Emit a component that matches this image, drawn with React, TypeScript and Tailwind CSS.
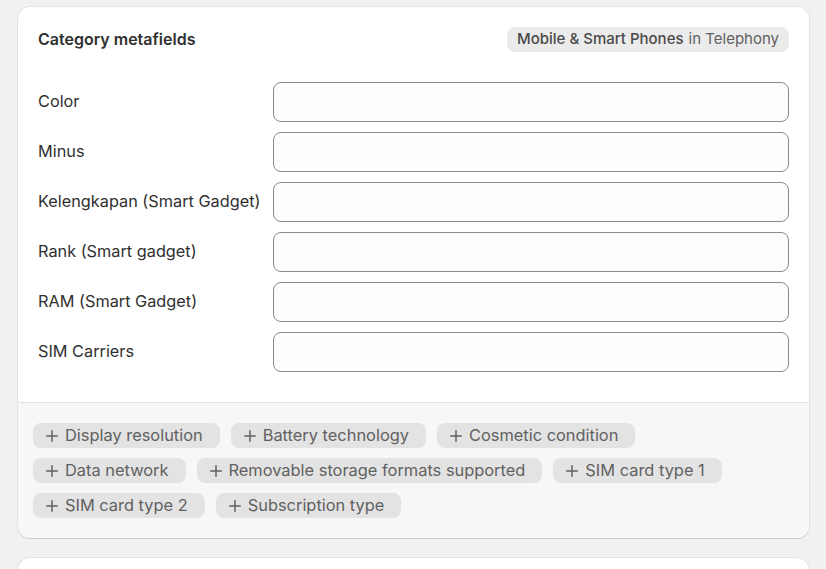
import React from "react";

const fields = [
  "Color",
  "Minus",
  "Kelengkapan (Smart Gadget)",
  "Rank (Smart gadget)",
  "RAM (Smart Gadget)",
  "SIM Carriers",
];

const chips = [
  "Display resolution",
  "Battery technology",
  "Cosmetic condition",
  "Data network",
  "Removable storage formats supported",
  "SIM card type 1",
  "SIM card type 2",
  "Subscription type",
];

function Plus() {
  return (
    <svg width="12" height="12" viewBox="0 0 12 12" fill="none" className="shrink-0">
      <path d="M6 0.75v10.5M0.75 6h10.5" stroke="#616161" strokeWidth="1.5" strokeLinecap="round" />
    </svg>
  );
}

export default function App() {
  return (
    <div
      className="h-[569px] bg-[#f1f1f1] pl-[18px] pr-[17px] pt-[7px] overflow-hidden"
      style={{ fontFamily: "Inter, 'Noto Sans', sans-serif" }}
    >
      <div className="rounded-[12px] bg-white shadow-[0_1px_0_0_rgba(26,26,26,0.12),0_0_0_1px_rgba(0,0,0,0.05)] overflow-hidden">
        <div className="px-5 pt-5 pb-[30px]">
          <div className="flex items-center justify-between h-[25px]">
            <h2 className="text-[16px] font-semibold text-[#303030] leading-[25px]">Category metafields</h2>
            <span className="rounded-[8px] bg-[#ebebeb] px-[10px] h-[25px] flex items-center text-[15px] text-[#616161]">
              <span className="font-medium text-[#4a4a4a]">Mobile &amp; Smart Phones</span>
              <span className="ml-[5px]">in Telephony</span>
            </span>
          </div>
          <div className="mt-[30px] flex flex-col gap-[10px]">
            {fields.map((f) => (
              <div key={f} className="grid grid-cols-[235px_1fr] items-center">
                <label className="text-[16.3px] text-[#303030] leading-[20px] -mt-[2px]">{f}</label>
                <div className="h-[40px] rounded-[8px] border border-[#8a8a8a] bg-[#fdfdfd]" />
              </div>
            ))}
          </div>
        </div>
        <div className="border-t border-[#e3e3e3] bg-[#f7f7f7] pl-[15px] pr-5 pt-[20px] pb-[20px]">
          <div className="flex flex-wrap gap-x-[11px] gap-y-[10px]">
            {chips.map((c) => (
              <div
                key={c}
                className="h-[25px] rounded-[8px] bg-[#e3e3e3] pl-[13px] pr-[17px] flex items-center gap-[7px] text-[16.4px] text-[#616161]"
              >
                <Plus />
                <span>{c}</span>
              </div>
            ))}
          </div>
        </div>
      </div>
      <div className="mt-[20px] h-[40px] rounded-t-[12px] bg-white shadow-[0_0_0_1px_rgba(0,0,0,0.05)]" />
    </div>
  );
}
